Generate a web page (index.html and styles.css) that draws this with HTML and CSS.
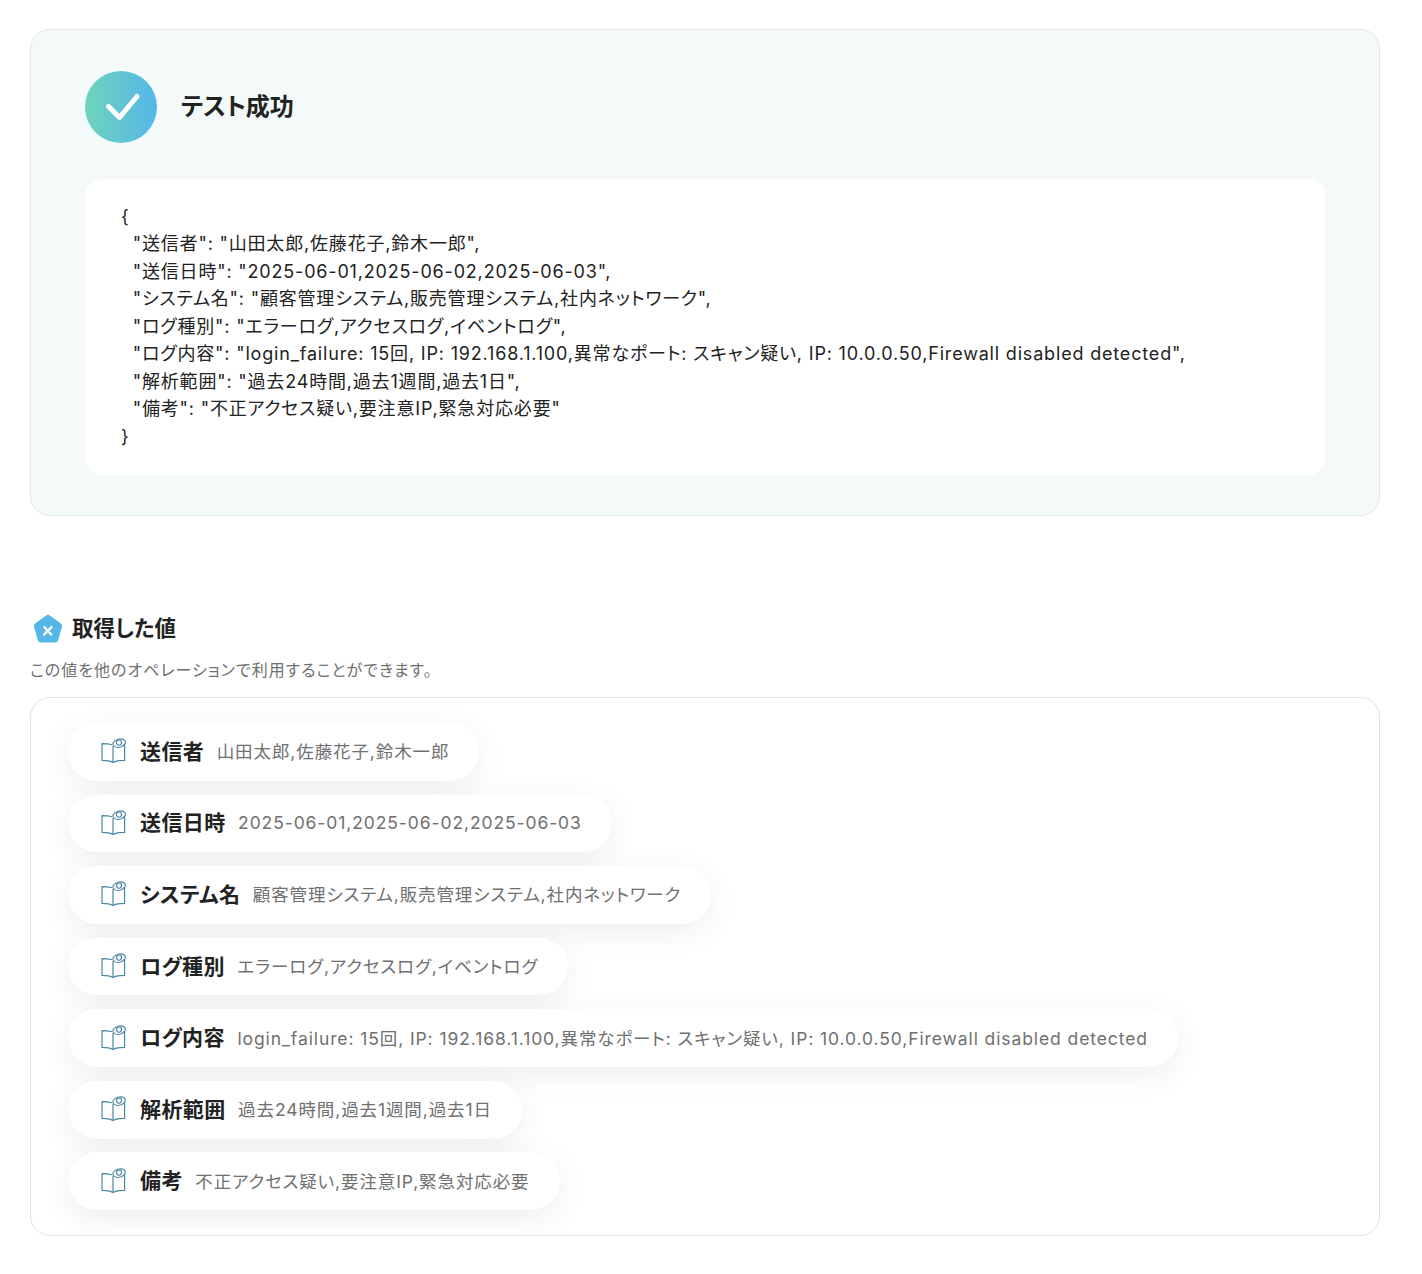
FILE: index.html
```html
<!DOCTYPE html>
<html lang="ja">
<head>
<meta charset="utf-8">
<title>テスト成功</title>
<link rel="stylesheet" href="styles.css">
</head>
<body>
<svg class="defs" width="0" height="0">
  <defs>
    <linearGradient id="grad" x1="0" y1="0" x2="1" y2="0">
      <stop offset="0" stop-color="#6fd3bd"/>
      <stop offset="1" stop-color="#55b7e8"/>
    </linearGradient>
    <symbol id="book" viewBox="0 0 26 27">
      <path d="M12 7.8 C9.6 7 6.2 6.6 2 6.6 V23.4 C7 23.4 10.6 24 13 25.6 C15.4 24 19 23.4 24.6 23.4 V7" fill="none" stroke="#4b86a3" stroke-width="1.2" stroke-linejoin="round"/>
      <path d="M13 9 V25.6" fill="none" stroke="#4b86a3" stroke-width="1.2"/>
      <path d="M13 5.8 C15 2.2 21 .6 24.6 3.2 C26.4 5.4 24.6 8.6 20.6 10 C17.4 11 14.6 10 13 8 Z" fill="#fff" stroke="#4b86a3" stroke-width="1.1"/>
      <circle cx="19" cy="5.6" r="2.6" fill="none" stroke="#4b86a3" stroke-width="1.1"/>
    </symbol>
  </defs>
</svg>
<main class="page">
  <section class="result">
    <div class="result-head">
      <svg class="check" viewBox="0 0 72 72" aria-hidden="true">
        <circle cx="36" cy="36" r="36" fill="url(#grad)"/>
        <path d="M23.5 35.5 L34.5 46.5 L52 25.5" fill="none" stroke="#fff" stroke-width="5" stroke-linecap="round" stroke-linejoin="round"/>
      </svg>
      <h1 class="result-title">テスト成功</h1>
    </div>
    <pre class="json">{
  "送信者": "山田太郎,佐藤花子,鈴木一郎",
  "送信日時": "2025-06-01,2025-06-02,2025-06-03",
  "システム名": "顧客管理システム,販売管理システム,社内ネットワーク",
  "ログ種別": "エラーログ,アクセスログ,イベントログ",
  "ログ内容": "login_failure: 15回, IP: 192.168.1.100,異常なポート: スキャン疑い, IP: 10.0.0.50,Firewall disabled detected",
  "解析範囲": "過去24時間,過去1週間,過去1日",
  "備考": "不正アクセス疑い,要注意IP,緊急対応必要"
}</pre>
  </section>

  <section class="values">
    <div class="values-head">
      <svg class="penta" viewBox="0 0 30 30" aria-hidden="true">
        <path d="M13.2 1.4 Q15 .2 16.8 1.4 L27.9 9.4 Q29.6 10.7 29 12.6 L25.4 25.6 Q24.8 28.4 22.4 28.4 H7.6 Q5.2 28.4 4.6 25.6 L1 12.6 Q.4 10.7 2.1 9.4 Z" fill="#55b7e8"/>
        <path d="M11.4 13 L18.2 20.6 M18.6 13 L11 20.6" fill="none" stroke="#fff" stroke-width="2.2" stroke-linecap="round"/>
      </svg>
      <h2 class="values-title">取得した値</h2>
    </div>
    <p class="values-note">この値を他のオペレーションで利用することができます。</p>
    <div class="values-box">
      <div class="pill"><svg class="book"><use href="#book"/></svg><span class="pill-key">送信者</span><span class="pill-val">山田太郎,佐藤花子,鈴木一郎</span></div>
      <div class="pill"><svg class="book"><use href="#book"/></svg><span class="pill-key">送信日時</span><span class="pill-val">2025-06-01,2025-06-02,2025-06-03</span></div>
      <div class="pill"><svg class="book"><use href="#book"/></svg><span class="pill-key">システム名</span><span class="pill-val">顧客管理システム,販売管理システム,社内ネットワーク</span></div>
      <div class="pill"><svg class="book"><use href="#book"/></svg><span class="pill-key">ログ種別</span><span class="pill-val">エラーログ,アクセスログ,イベントログ</span></div>
      <div class="pill"><svg class="book"><use href="#book"/></svg><span class="pill-key">ログ内容</span><span class="pill-val">login_failure: 15回, IP: 192.168.1.100,異常なポート: スキャン疑い, IP: 10.0.0.50,Firewall disabled detected</span></div>
      <div class="pill"><svg class="book"><use href="#book"/></svg><span class="pill-key">解析範囲</span><span class="pill-val">過去24時間,過去1週間,過去1日</span></div>
      <div class="pill"><svg class="book"><use href="#book"/></svg><span class="pill-key">備考</span><span class="pill-val">不正アクセス疑い,要注意IP,緊急対応必要</span></div>
    </div>
  </section>
</main>
</body>
</html>
```
FILE: styles.css
```css
* { box-sizing: border-box; }
html, body { margin: 0; padding: 0; background: #fff; }
body {
  font-family: Inter, "Noto Sans CJK JP", sans-serif;
  font-feature-settings: "palt";
  color: #222;
}
.defs { display: block; height: 0; }
.page { width: 1350px; margin-left: 30px; padding-top: 29px; }
.result {
  height: 487px;
  padding: 41px 54px 40px;
  background: #f4f9f9;
  border: 1px solid #e2e8e8;
  border-radius: 20px;
}
.result-head { display: flex; align-items: center; gap: 24px; }
.check { width: 72px; height: 72px; display: block; flex: none; }
.result-title { margin: 0; font-size: 24px; font-weight: 700; line-height: 1.4; color: #222; }
.json {
  margin: 36px 0 0;
  height: 296px;
  padding: 23.6px 36px;
  background: #fff;
  border-radius: 16px;
  font-family: Inter, "Noto Sans CJK JP", sans-serif;
  font-size: 18px;
  letter-spacing: 0.82px;
  line-height: 27.5px;
  white-space: pre-wrap;
  color: #222;
}
.values { margin-top: 97px; }
.values-head { display: flex; align-items: center; gap: 9px; padding-left: 3px; height: 32px; }
.penta { width: 30px; height: 30px; display: block; flex: none; }
.values-title { margin: 0 0 2px; font-size: 21.5px; font-weight: 700; line-height: 1.4; color: #222; }
.values-note { margin: 13px 0 0; font-size: 16px; letter-spacing: 1px; line-height: 24px; color: #707070; }
.values-box {
  margin-top: 15px;
  height: 539px;
  padding: 25px 37px;
  border: 1px solid #e2e2e2;
  border-radius: 20px;
  display: flex;
  flex-direction: column;
  align-items: flex-start;
  gap: 13.6px;
}
.pill {
  display: flex;
  align-items: center;
  height: 58px;
  padding: 0 30px 2px 32px;
  background: #fff;
  border-radius: 29px;
  box-shadow: 0 8px 32px rgba(0, 0, 0, 0.07);
}
.book { width: 26px; height: 27px; display: block; flex: none; margin-right: 14px; }
.pill-key { font-size: 21px; letter-spacing: 0.4px; font-weight: 700; color: #222; margin: 0 12.5px 2px 0; white-space: nowrap; }
.pill-val { font-size: 17.5px; letter-spacing: 0.9px; color: #707070; white-space: nowrap; }
```
